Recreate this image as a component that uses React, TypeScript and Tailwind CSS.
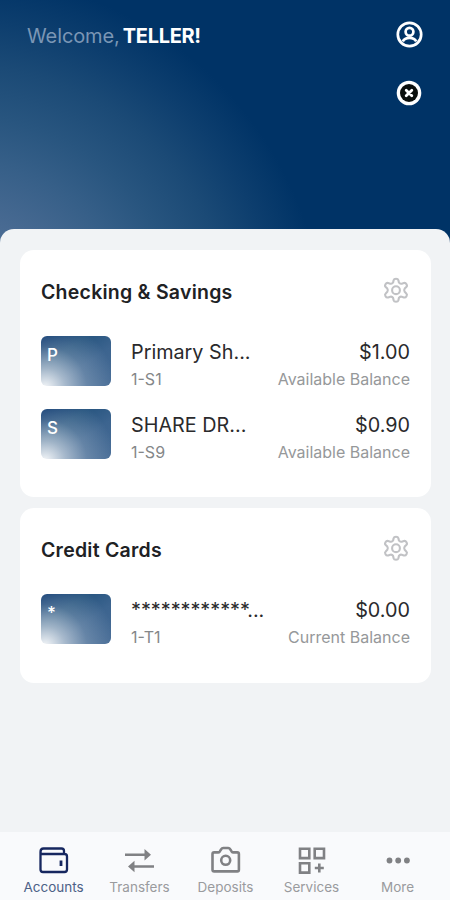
const checking = [
    { letter: "P", name: "Primary Sh...", id: "1-S1", amount: "$1.00", label: "Available Balance" },
    { letter: "S", name: "SHARE DR...", id: "1-S9", amount: "$0.90", label: "Available Balance" },
];

const credit = [
    { letter: "*", name: "************...", id: "1-T1", amount: "$0.00", label: "Current Balance" },
];

export default function App() {
    return <div className="h-[900px] w-[450px] flex flex-col overflow-hidden bg-[#003366] bg-[radial-gradient(circle_at_-40px_340px,#6080a4_0px,#486a92_122px,#365f88_180px,#28557f_225px,#1b4a76_275px,#0d3e6e_320px,#003366_365px)] font-['Inter',sans-serif]">
        <Header />
        <main className="flex-1 rounded-t-[14px] bg-[#f1f3f5] pl-5 pr-[19px] pt-[21px] flex flex-col gap-[11px]">
            <Section title="Checking & Savings" accounts={checking} height="h-[247px]" />
            <Section title="Credit Cards" accounts={credit} height="h-[175px]" />
        </main>
        <BottomNav />
    </div>
}

function Header() {
    return <header className="h-[229px] shrink-0 flex justify-between px-[27px] pt-[21px]">
        <div className="h-[29px] flex items-center whitespace-pre text-[20px] tracking-[-0.1px] text-[#7b96b5]">
            <span>Welcome,</span>
            <span className="ml-[3px] font-bold text-white tracking-[-0.3px]">TELLER!</span>
        </div>
        <div className="flex flex-col items-start gap-8">
            <svg width="27" height="27" viewBox="0 0 27 27" fill="none" stroke="white" strokeWidth="2.7">
                <circle cx="13.5" cy="13.5" r="11.7" />
                <circle cx="13.5" cy="10.8" r="3.9" />
                <path d="M6.8 20.5c1-2.3 3.3-3.7 6.7-3.7s5.7 1.4 6.7 3.7" />
            </svg>
            <svg width="26" height="26" viewBox="0 0 26 26">
                <circle cx="13" cy="13" r="12.3" fill="white" />
                <circle cx="13" cy="13" r="9" fill="#0b0f0d" />
                <path d="M10.2 10.2l5.6 5.6M15.8 10.2l-5.6 5.6" stroke="white" strokeWidth="2.8" strokeLinecap="round" />
            </svg>
        </div>
    </header>
}

function Section({ title, accounts, height }: any) {
    return <section className={`${height} rounded-[14px] bg-white px-[21px] pt-[26px]`}>
        <div className="flex items-center justify-between h-8">
            <h2 className="pt-px text-[19.5px] tracking-[0.24px] font-semibold text-[#202124] whitespace-nowrap">{title}</h2>
            <Gear />
        </div>
        <div className="mt-7 flex flex-col gap-[22.5px]">
            {accounts.map((account: any) => <Account key={account.id} account={account} />)}
        </div>
    </section>
}

function Account({ account }: any) {
    return <div className="flex h-[50px]">
        <div className="h-[50px] w-[70px] rounded-[6px] bg-[radial-gradient(circle_at_4px_52px,rgba(255,255,255,0.95)_0px,rgba(255,255,255,0.55)_20px,rgba(255,255,255,0.2)_42px,rgba(255,255,255,0)_70px),linear-gradient(145deg,#02306a_0%,#26547f_32%,#3c648f_60%,#476c96_100%)] pl-[6px] pt-[9px] text-[17px] leading-5 font-medium text-white">
            {account.letter}
        </div>
        <div className="ml-5 pt-[3px]">
            <div className="text-[19.8px] leading-[26px] text-[#2a2a2c] whitespace-nowrap">{account.name}</div>
            <div className="mt-px text-[16px] leading-[26px] text-[#858789]">{account.id}</div>
        </div>
        <div className="ml-auto pt-[3px] text-right">
            <div className="text-[19.8px] leading-[26px] text-[#2a2a2c]">{account.amount}</div>
            <div className="mt-px text-[16px] leading-[26px] text-[#96989a] whitespace-nowrap">{account.label}</div>
        </div>
    </div>
}

function Gear() {
    return <svg width="26" height="27" viewBox="0 0 26 27" className="-mt-1 mr-px" fill="none" stroke="#c1c2c5" strokeWidth="2.1" strokeLinejoin="round">
        <path d="M10.6 3.2Q11 1.7 13 1.7t2.4 1.5l.5 2.3q1 1.6 2.8 1.2l2.2-.7q1.6-.4 2.6 1.3t-.2 2.7L21.7 11.6q-1.1 1.6 0 3.2l1.6 1.6q1.2 1.1.2 2.8t-2.6 1.2l-2.2-.7q-1.8-.4-2.8 1.2l-.5 2.3q-.4 1.6-2.4 1.6t-2.4-1.6l-.5-2.3q-1-1.6-2.8-1.2l-2.2.7q-1.6.5-2.6-1.2t.2-2.8l1.6-1.6q1.1-1.6 0-3.2L2.7 10q-1.2-1-.2-2.7T5.1 6l2.2.7q1.8.4 2.8-1.2z" />
        <circle cx="13" cy="13.2" r="3.9" />
    </svg>
}

function BottomNav() {
    return <nav className="h-[68px] shrink-0 bg-[#f9fafc] pl-[10.5px] pr-[9.5px] grid grid-cols-5 text-[13.5px] text-[#9a9b9e]">
        <NavItem label="Accounts" active>
            <svg width="30" height="30" viewBox="0 0 30 30" fill="none" stroke="#16275f" strokeWidth="2.3">
                <path d="M1.5 6v17.5Q1.5 26 4 26h21.500q2.500 0 2.500-2.500V10.500Q28 8 25.500 8H3.500q-2 0-2-2 0-3.500 3-3.500h18q2.500 0 2.500 2.500v3" />
                <path d="M22 14.500V20" strokeWidth="2.8" />
            </svg>
        </NavItem>
        <NavItem label="Transfers">
            <svg width="30" height="30" viewBox="0 0 30 30" fill="none" stroke="#808184" strokeWidth="2.6">
                <path d="M0 8.8h24M29 20.5H5" />
                <path d="M19.500 3L26 8.800l-6.500 5.800zM9.500 14.700L3 20.500l6.500 5.800z" fill="#808184" stroke="none" />
            </svg>
        </NavItem>
        <NavItem label="Deposits">
            <svg width="30" height="30" viewBox="0 0 30 30" fill="none" stroke="#808184" strokeWidth="2.6" strokeLinejoin="round">
                <path d="M1.500 8q0-1.600 1.600-1.600h4q1 0 1.700-1l1.400-2.200q.7-1.200 2-1.200h5q1.300 0 2 1.200l1.400 2.200q.7 1 1.700 1h4q1.600 0 1.600 1.600v15.800q0 1.600-1.600 1.600H3.100q-1.600 0-1.600-1.600z" />
                <circle cx="14.700" cy="14.300" r="4.500" />
            </svg>
        </NavItem>
        <NavItem label="Services">
            <svg width="30" height="30" viewBox="0 0 30 30" fill="none" stroke="#808184" strokeWidth="2.6">
                <path d="M3 2.800h9.300v9.300H3zM17.700 2.800h9.300v9.300h-9.300zM3 17.300h9.300v9.300H3zM22.300 17.500v9M17.800 22h9" />
            </svg>
        </NavItem>
        <NavItem label="More">
            <svg width="30" height="30" viewBox="0 0 30 30" fill="#808184">
                <circle cx="6.500" cy="14.500" r="2.900" />
                <circle cx="15.200" cy="14.500" r="2.900" />
                <circle cx="23.900" cy="14.500" r="2.900" />
            </svg>
        </NavItem>
    </nav>
}

function NavItem({ label, active, children }: any) {
    return <div className="flex flex-col items-center pt-[13px]">
        <div className="h-[32px] flex items-center">{children}</div>
        <div className={active ? "text-[#4c6187] leading-5" : "leading-5"}>{label}</div>
    </div>
}
